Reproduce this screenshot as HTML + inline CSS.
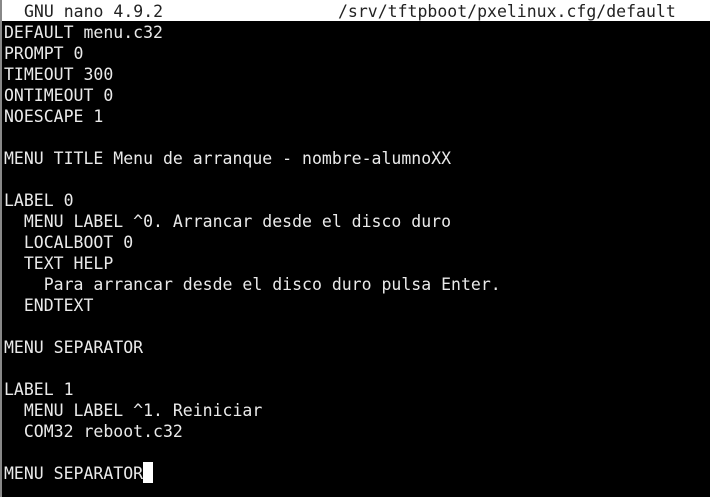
<!DOCTYPE html>
<html><head><meta charset="utf-8"><style>
html,body{margin:0;padding:0;background:#000;width:710px;height:497px;overflow:hidden}
body{position:relative;font-family:"DejaVu Sans Mono","Liberation Mono",monospace;font-size:16.5px;color:#eaeaea}
.bar{position:absolute;left:0;top:0;width:710px;height:21px;background:#fff;color:#222}
.l{position:absolute;left:4px;white-space:pre;line-height:21px;height:21px;margin-top:1px}
.edge{position:absolute;left:0;top:0;width:2px;height:497px;background:#888}
.cur{display:inline-block;width:10px;height:21px;background:#fff;vertical-align:top;margin-top:-1px}
</style></head><body>
<div class="bar"><span class="l" style="top:0;left:24px">GNU nano 4.9.2</span><span class="l" style="top:0;left:338px">/srv/tftpboot/pxelinux.cfg/default</span></div>
<div class="l" style="top:21px">DEFAULT menu.c32</div>
<div class="l" style="top:42px">PROMPT 0</div>
<div class="l" style="top:63px">TIMEOUT 300</div>
<div class="l" style="top:84px">ONTIMEOUT 0</div>
<div class="l" style="top:105px">NOESCAPE 1</div>
<div class="l" style="top:147px">MENU TITLE Menu de arranque - nombre-alumnoXX</div>
<div class="l" style="top:189px">LABEL 0</div>
<div class="l" style="top:210px">  MENU LABEL ^0. Arrancar desde el disco duro</div>
<div class="l" style="top:231px">  LOCALBOOT 0</div>
<div class="l" style="top:252px">  TEXT HELP</div>
<div class="l" style="top:273px">    Para arrancar desde el disco duro pulsa Enter.</div>
<div class="l" style="top:294px">  ENDTEXT</div>
<div class="l" style="top:336px">MENU SEPARATOR</div>
<div class="l" style="top:378px">LABEL 1</div>
<div class="l" style="top:399px">  MENU LABEL ^1. Reiniciar</div>
<div class="l" style="top:420px">  COM32 reboot.c32</div>
<div class="l" style="top:462px">MENU SEPARATOR<span class="cur"></span></div>
<div class="edge"></div>
</body></html>
